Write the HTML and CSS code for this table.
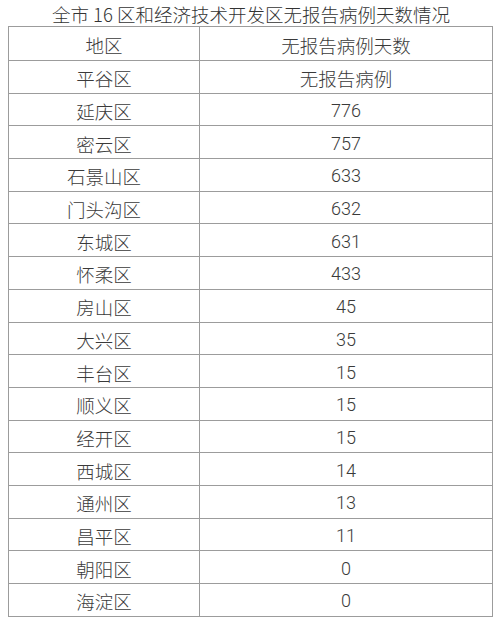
FILE: index.html
```html
<!DOCTYPE html>
<html lang="zh-CN">
<head>
<meta charset="utf-8">
<title>全市16区和经济技术开发区无报告病例天数情况</title>
<link rel="stylesheet" href="styles.css">
</head>
<body>
<div class="page">
  <h1 class="title">全市 16 区和经济技术开发区无报告病例天数情况</h1>
  <table class="data">
    <colgroup><col class="c1"><col class="c2"></colgroup>
    <thead>
      <tr class="head"><th>地区</th><th>无报告病例天数</th></tr>
    </thead>
    <tbody>
      <tr><td>平谷区</td><td>无报告病例</td></tr>
      <tr><td>延庆区</td><td class="num">776</td></tr>
      <tr><td>密云区</td><td class="num">757</td></tr>
      <tr><td>石景山区</td><td class="num">633</td></tr>
      <tr><td>门头沟区</td><td class="num">632</td></tr>
      <tr><td>东城区</td><td class="num">631</td></tr>
      <tr><td>怀柔区</td><td class="num">433</td></tr>
      <tr><td>房山区</td><td class="num">45</td></tr>
      <tr><td>大兴区</td><td class="num">35</td></tr>
      <tr><td>丰台区</td><td class="num">15</td></tr>
      <tr><td>顺义区</td><td class="num">15</td></tr>
      <tr><td>经开区</td><td class="num">15</td></tr>
      <tr><td>西城区</td><td class="num">14</td></tr>
      <tr><td>通州区</td><td class="num">13</td></tr>
      <tr><td>昌平区</td><td class="num">11</td></tr>
      <tr><td>朝阳区</td><td class="num">0</td></tr>
      <tr><td>海淀区</td><td class="num">0</td></tr>
    </tbody>
  </table>
</div>
</body>
</html>
```
FILE: styles.css
```css
html, body {
  margin: 0;
  padding: 0;
  background: #ffffff;
}
body {
  font-family: "Noto Sans CJK SC", "Noto Sans", sans-serif;
  color: #3a3a3a;
}
.page {
  width: 500px;
  height: 624px;
  overflow: hidden;
}
.title {
  margin: 0;
  height: 26px;
  line-height: 28px;
  font-size: 18.5px;
  font-weight: 300;
  text-align: center;
  color: #333333;
  padding-left: 2px;
}
.data {
  margin-left: 8px;
  width: 485px;
  border-collapse: collapse;
  table-layout: fixed;
}
.data col.c1 { width: 191px; }
.data th,
.data td {
  border: 1.5px solid #9c9c9c;
  padding: 3px 0 0 0;
  text-align: center;
  vertical-align: middle;
  font-size: 18.5px;
  font-weight: 300;
  line-height: 20px;
  color: #3a3a3a;
}
.data tr { height: 32.7px; }
.data tr.head { height: 34px; }
.data td.num {
  font-family: "Roboto", "Liberation Sans", Arial, sans-serif;
  font-weight: 300;
  font-size: 18px;
  color: #3a3a3a;
}
```
